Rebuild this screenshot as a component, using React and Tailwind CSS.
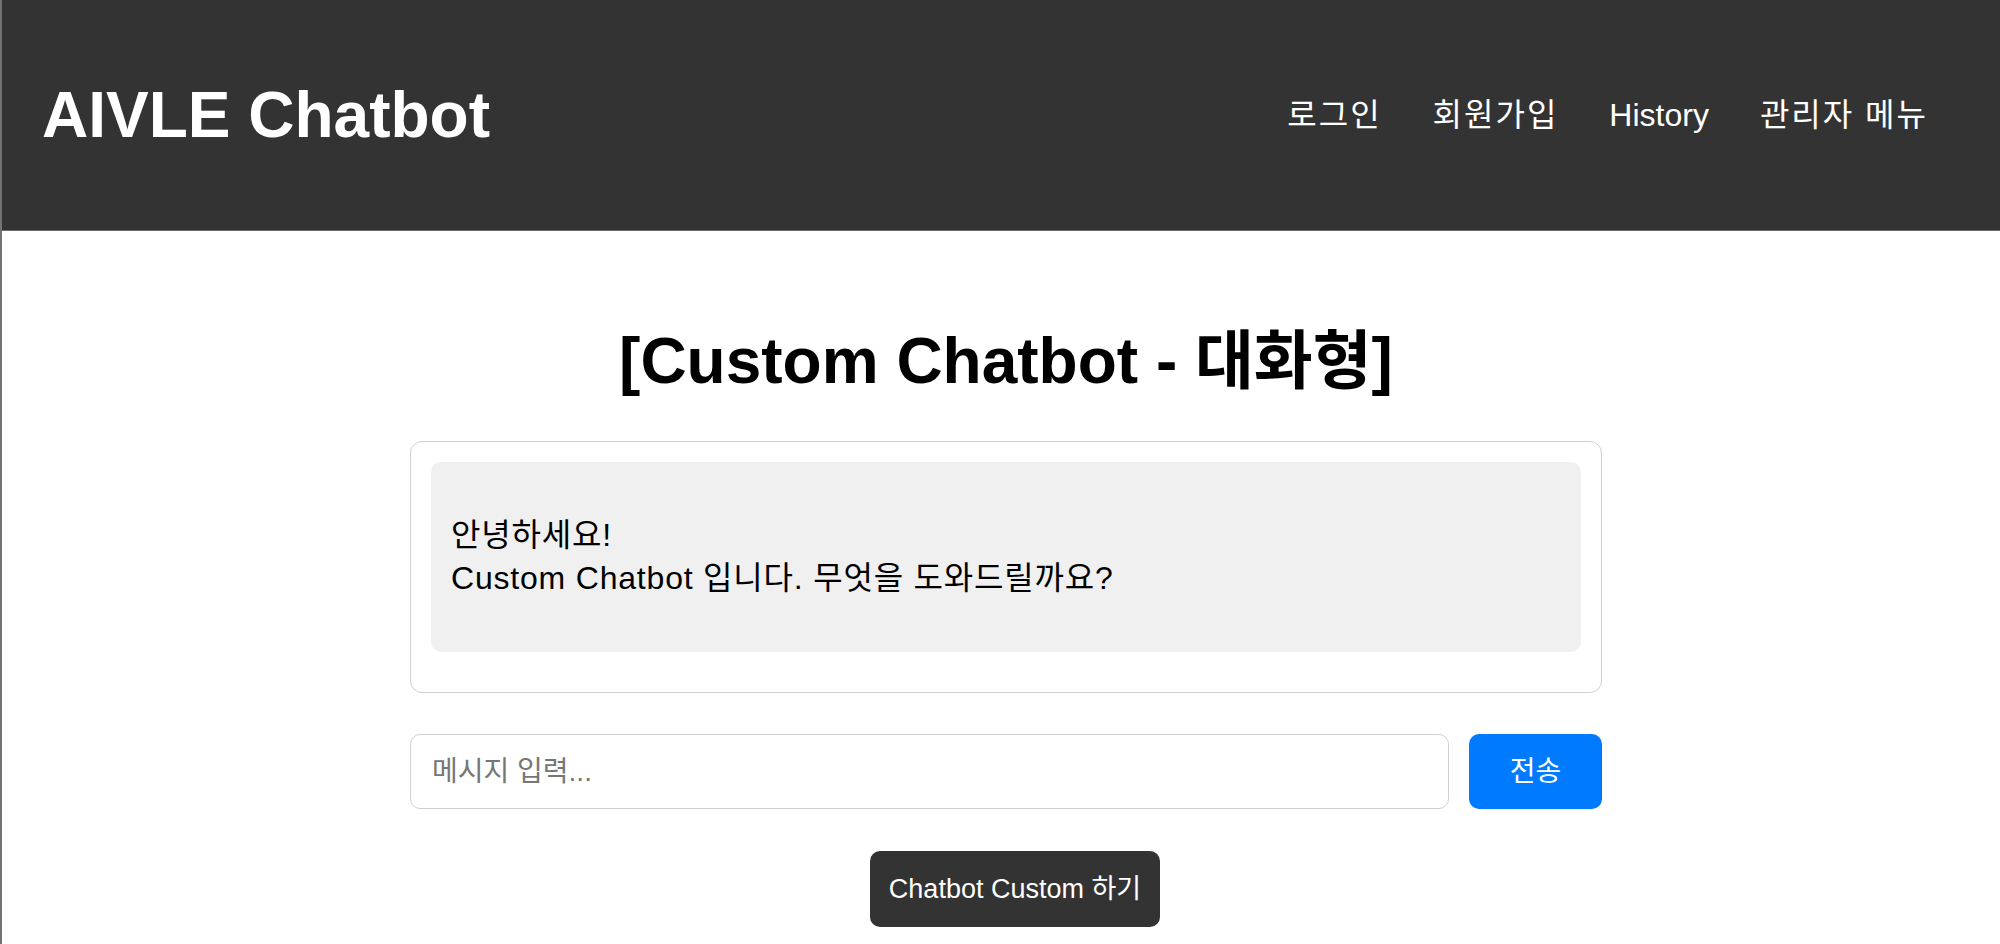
import { useState } from 'react';

const FONT = "font-['Liberation_Sans','Noto_Sans_CJK_KR',sans-serif]";

export default function App() {
  const [messages] = useState([
    { role: 'bot', lines: ['안녕하세요!', 'Custom Chatbot 입니다. 무엇을 도와드릴까요?'] }
  ]);
  const [input, setInput] = useState('');

  return (
    <div className={`min-h-screen bg-white border-l-2 border-[#737373] ${FONT}`}>
      <header className="h-[231px] bg-[#333333] border-b border-[#6a6a6a] flex items-center justify-between pl-[40px] pr-[72px]">
        <h1 className="text-[64px] font-bold text-white leading-none">AIVLE Chatbot</h1>
        <nav className="flex items-center gap-[51px] text-[32px] text-white">
          <a href="#" className="tracking-[2px]">로그인</a>
          <a href="#" className="tracking-[2px]">회원가입</a>
          <a href="#">History</a>
          <a href="#" className="tracking-[2px]">관리자 메뉴</a>
        </nav>
      </header>

      <main className="flex flex-col items-center pl-[10px]">
        <h2 className="mt-[90px] text-[64px] leading-[80px] font-bold text-black">
          [Custom Chatbot - 대화형]
        </h2>

        <div className="mt-[40px] w-[1192px] border-[1.5px] border-[#d0d0d0] rounded-[12px] p-[20px] pb-[40px]">
          {messages.map((m, i) => (
            <div key={i} className="bg-[#f0f0f0] rounded-[10px] px-[20px] py-[52px] text-[32px] leading-[43px] tracking-[0.8px] text-black">
              {m.lines.map((line, j) => (
                <div key={j}>{line}</div>
              ))}
            </div>
          ))}
        </div>

        <div className="mt-[41px] w-[1192px] flex gap-[20px] h-[75px]">
          <input
            value={input}
            onChange={(e) => setInput(e.target.value)}
            placeholder="메시지 입력..."
            className="flex-1 border-[1.5px] border-[#d0d0d0] rounded-[10px] px-[21px] text-[28px] text-black placeholder:text-[#767676] outline-none"
          />
          <button className="w-[133px] bg-[#007bff] text-white text-[28px] rounded-[10px]">
            전송
          </button>
        </div>

        <button className="mt-[42px] ml-[18px] h-[76px] px-[19px] bg-[#333333] text-white text-[27px] rounded-[10px]">
          Chatbot Custom 하기
        </button>
      </main>
    </div>
  );
}
